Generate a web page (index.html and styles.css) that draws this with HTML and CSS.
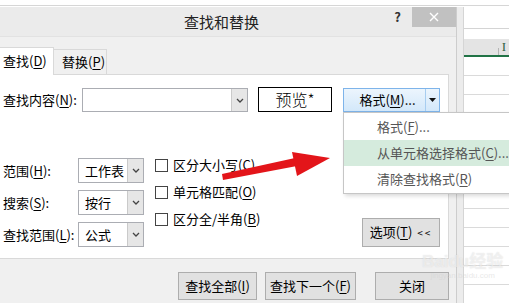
FILE: index.html
```html
<!DOCTYPE html>
<html lang="zh-CN">
<head>
  <meta charset="UTF-8">
  <title>查找和替换</title>
  <link rel="stylesheet" href="styles.css">
</head>
<body>

<div class="screen">
  <div class="topline"></div>
  <div class="main">
    <div class="dialog">
      <div class="titlebar">
        <span class="title">查找和替换</span>
        <span class="help">?</span>
        <span class="close">
          <svg width="10" height="10" viewBox="0 0 10 10"><path d="M1 1L9 9M9 1L1 9" stroke="#fff" stroke-width="1.4"/></svg>
        </span>
      </div>

      <div class="body">
        <div class="tabs">
          <div class="tab active">查找(<u>D</u>)</div>
          <div class="tab">替换(<u>P</u>)</div>
        </div>

        <div class="panel">
          <div class="find-row">
            <span class="label">查找内容(<u>N</u>):</span>
            <div class="combo wide">
              <span class="combo-text"></span>
              <span class="combo-arrow"><svg width="8" height="5" viewBox="0 0 8 5"><path d="M1 1L4 4L7 1" fill="none" stroke="#444" stroke-width="1.3"/></svg></span>
            </div>
            <div class="preview">预览*</div>
            <div class="format-btn">
              <span class="format-main">格式(<u>M</u>)...</span>
              <span class="format-arrow"><svg width="7" height="4" viewBox="0 0 7 4"><path d="M0 0H7L3.5 4Z" fill="#111"/></svg></span>
            </div>
          </div>

          <div class="options">
            <div class="selects">
              <div class="opt-row">
                <span class="opt-label">范围(<u>H</u>):</span>
                <div class="combo small">
                  <span class="combo-text">工作表</span>
                  <span class="combo-arrow"><svg width="8" height="5" viewBox="0 0 8 5"><path d="M1 1L4 4L7 1" fill="none" stroke="#444" stroke-width="1.3"/></svg></span>
                </div>
              </div>
              <div class="opt-row">
                <span class="opt-label">搜索(<u>S</u>):</span>
                <div class="combo small">
                  <span class="combo-text">按行</span>
                  <span class="combo-arrow"><svg width="8" height="5" viewBox="0 0 8 5"><path d="M1 1L4 4L7 1" fill="none" stroke="#444" stroke-width="1.3"/></svg></span>
                </div>
              </div>
              <div class="opt-row">
                <span class="opt-label">查找范围(<u>L</u>):</span>
                <div class="combo small">
                  <span class="combo-text">公式</span>
                  <span class="combo-arrow"><svg width="8" height="5" viewBox="0 0 8 5"><path d="M1 1L4 4L7 1" fill="none" stroke="#444" stroke-width="1.3"/></svg></span>
                </div>
              </div>
            </div>

            <div class="checks">
              <div class="check"><span class="box"></span>区分大小写(<u>C</u>)</div>
              <div class="check"><span class="box"></span>单元格匹配(<u>O</u>)</div>
              <div class="check"><span class="box"></span>区分全/半角(<u>B</u>)</div>
            </div>

            <div class="btn opt-btn">选项(<u>T</u>) <span class="chev">&lt;&lt;</span></div>
          </div>
        </div>

        <div class="footer">
          <div class="btn find-all">查找全部(<u>I</u>)</div>
          <div class="btn find-next">查找下一个(<u>F</u>)</div>
          <div class="btn close-btn">关闭</div>
        </div>
      </div>
    </div>

    <div class="frame"></div>

    <div class="sheet">
      <div class="sheet-top"></div>
      <div class="col-head"><span class="col-name">I</span></div>
      <div class="cell-row"></div>
      <div class="cell-row"></div>
      <div class="cell-row"></div>
      <div class="cell-row"></div>
      <div class="cell-row"></div>
      <div class="cell-row"></div>
      <div class="cell-row"></div>
      <div class="cell-row"></div>
      <div class="cell-row"></div>
      <div class="cell-row"></div>
      <div class="cell-row"></div>
      <div class="cell-row"></div>
      <div class="cell-row"></div>
    </div>
  </div>

  <!-- dropdown of the format button -->
  <div class="menu">
    <div class="menu-item">格式(<u>F</u>)...</div>
    <div class="menu-item hot">从单元格选择格式(<u>C</u>)...</div>
    <div class="menu-item">清除查找格式(<u>R</u>)</div>
  </div>

  <svg class="arrow" width="509" height="303" viewBox="0 0 509 303">
    <path d="M222 174 L295 158 L297 166 L223 180 Z" fill="#e3151a"/>
    <path d="M292 152 L330 158 L297 176 Z" fill="#e3151a"/>
  </svg>

  <div class="watermark">
    <span class="wm-big">Baidu经验</span>
    <span class="wm-small">jingyan.baidu.com</span>
  </div>
</div>

</body>
</html>
```

FILE: styles.css
```css
* {
  box-sizing: border-box;
}

body {
  margin: 0;
  font-family: "Noto Sans CJK SC", "Microsoft YaHei", sans-serif;
  font-size: 13px;
  color: #000;
  background-color: #fff;
}

u {
  text-decoration-thickness: 1px;
  text-underline-offset: 2px;
}

.screen {
  position: relative;
  width: 509px;
  height: 303px;
  overflow: hidden;
}

.topline {
  height: 6px;
  border-bottom: 1px solid #d6d6d6;
  margin-bottom: 1px;
}

.main {
  display: flex;
  height: 296px;
}

/* dialog */
.dialog {
  width: 457px;
  flex: none;
  display: flex;
  flex-direction: column;
  background-color: #f0f0f0;
  border-right: 1px solid #cdcdcd;
}

.titlebar {
  height: 30px;
  display: flex;
  align-items: flex-start;
  background-color: #ebebeb;
  border-bottom: 1px solid #e2e2e2;
}

.title {
  margin-left: 184px;
  line-height: 30px;
  font-size: 15px;
  color: #222;
}

.help {
  margin-left: auto;
  margin-right: 11px;
  line-height: 20px;
  font-weight: bold;
  font-size: 13px;
  color: #333;
}

.close {
  width: 44px;
  height: 20px;
  display: flex;
  align-items: center;
  justify-content: center;
  background-color: #c1c1c1;
}

.body {
  padding-top: 10px;
}

.tabs {
  display: flex;
  align-items: flex-end;
  height: 27px;
}

.tab {
  height: 25px;
  width: 53px;
  padding-left: 8px;
  line-height: 24px;
  background-color: #f0f0f0;
  border: 1px solid #d9d9d9;
  border-left: none;
  border-bottom: none;
}

.tab.active {
  height: 28px;
  width: 54px;
  margin-bottom: -1px;
  padding-left: 3px;
  line-height: 25px;
  background-color: #fff;
  position: relative;
  z-index: 1;
}

.panel {
  width: 449px;
  padding: 12px 0 11px 3px;
  background-color: #fff;
  border: 1px solid #d9d9d9;
  border-left: none;
}

.find-row {
  display: flex;
  align-items: flex-end;
  height: 25px;
}

.label {
  width: 79px;
  align-self: center;
}

.combo {
  display: flex;
  height: 24px;
  background-color: #fff;
  border: 1px solid #abadb3;
}

.combo.wide {
  width: 166px;
}

.combo.small {
  width: 66px;
  height: 25px;
}

.combo-text {
  flex: 1;
  padding-left: 6px;
  line-height: 23px;
}

.combo-arrow {
  width: 16px;
  display: flex;
  align-items: center;
  justify-content: center;
  background-color: #e6e6e6;
  border-left: 1px solid #cacaca;
}

.preview {
  width: 74px;
  height: 25px;
  margin-left: 10px;
  border: 1px solid #000;
  text-align: center;
  font-size: 16px;
  line-height: 22px;
  font-weight: 300;
}

.format-btn {
  display: flex;
  width: 97px;
  height: 24px;
  margin-left: 11px;
  border: 1px solid #7eb4ea;
  background: linear-gradient(#ecf5fd, #d3e8fa);
}

.format-main {
  flex: 1;
  text-align: center;
  line-height: 22px;
  padding-left: 6px;
}

.format-arrow {
  width: 14px;
  display: flex;
  align-items: center;
  justify-content: center;
  border-left: 1px solid #a7cdf0;
}

.options {
  display: flex;
  margin-top: 46px;
}

.selects {
  display: flex;
  flex-direction: column;
  gap: 7px;
  width: 141px;
}

.opt-row {
  display: flex;
  align-items: center;
}

.opt-label {
  width: 75px;
}

.checks {
  display: flex;
  flex-direction: column;
  gap: 13px;
  margin-left: 11px;
}

.check {
  display: flex;
  align-items: center;
  height: 14px;
  line-height: 14px;
}

.check .box {
  width: 13px;
  height: 13px;
  margin-right: 5px;
  border: 1px solid #444;
  background-color: #fff;
}

.btn {
  height: 28px;
  line-height: 26px;
  text-align: center;
  background-color: #e1e1e1;
  border: 1px solid #adadad;
}

.opt-btn {
  align-self: flex-end;
  width: 78px;
  height: 29px;
  margin-left: auto;
  margin-right: 8px;
}

.chev {
  font-size: 10px;
  letter-spacing: 2px;
  margin-left: 2px;
}

.footer {
  display: flex;
  justify-content: flex-end;
  padding: 13px 7px 0 0;
}

.find-all {
  width: 79px;
}

.find-next {
  width: 91px;
  margin-left: 8px;
}

.close-btn {
  width: 74px;
  margin-left: 19px;
}

.frame {
  width: 7px;
  flex: none;
  background-color: #ececec;
  border-right: 1px solid #d5d5d5;
}

/* excel behind the dialog */
.sheet {
  flex: 1;
}

.sheet-top {
  height: 22px;
  border-bottom: 1px solid #d4d4d4;
  margin-bottom: 10px;
}

.col-head {
  display: flex;
  justify-content: flex-end;
  height: 18px;
  padding-right: 3px;
  background-color: #e4e4e4;
  border-bottom: 2px solid #217346;
}

.col-name {
  position: relative;
  padding-left: 4px;
  line-height: 16px;
  font-size: 13px;
  color: #2f5f43;
  font-family: "Liberation Serif", serif;
}

.col-name::before {
  content: "";
  position: absolute;
  left: 0;
  bottom: 0;
  height: 7px;
  border-left: 1px solid #b5b5b5;
}

.cell-row {
  height: 19px;
  border-bottom: 1px solid #dadada;
}

/* overlays */
.menu {
  position: absolute;
  left: 343px;
  top: 112px;
  width: 180px;
  padding: 1px 0;
  background-color: #fff;
  border: 1px solid #c6c6c6;
  box-shadow: 2px 2px 4px rgba(0, 0, 0, 0.15);
}

.menu-item {
  height: 26px;
  line-height: 26px;
  padding-left: 33px;
  color: #555;
}

.menu-item.hot {
  background-color: #d5ebdd;
}

.arrow {
  position: absolute;
  left: 0;
  top: 0;
}

.watermark {
  position: absolute;
  left: 422px;
  top: 252px;
  display: flex;
  flex-direction: column;
  align-items: center;
  pointer-events: none;
}

.wm-big {
  font-size: 17px;
  line-height: 19px;
  font-weight: bold;
  font-family: "Liberation Sans", "Noto Sans CJK SC", sans-serif;
  color: rgba(255, 255, 255, 0.55);
  text-shadow: 0 0 1px rgba(140, 140, 140, 0.3);
}

.wm-small {
  font-size: 8px;
  line-height: 10px;
  color: rgba(210, 210, 210, 0.5);
  font-family: "Liberation Sans", sans-serif;
}
```
